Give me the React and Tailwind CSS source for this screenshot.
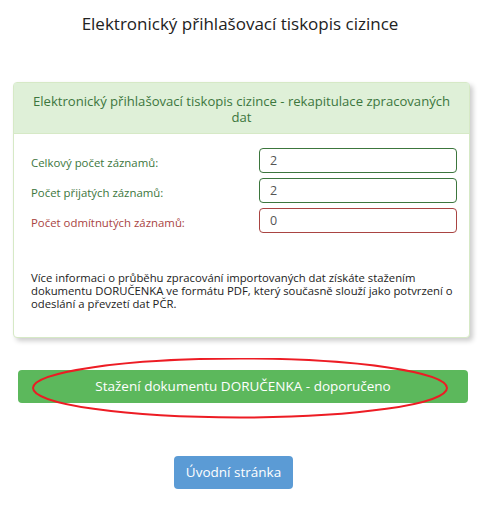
export default function App() {
  const rows = [
    { label: "Celkový počet záznamů:", value: "2", ok: true },
    { label: "Počet přijatých záznamů:", value: "2", ok: true },
    { label: "Počet odmítnutých záznamů:", value: "0", ok: false },
  ];

  return (
    <div className="w-[493px] h-[519px] bg-white text-[#333] font-['Open_Sans',sans-serif]">
      <h1 className="w-[480px] pt-[11px] text-center text-[17px] leading-[26px] text-[#222]">
        Elektronický přihlašovací tiskopis cizince
      </h1>

      {/* Panel */}
      <div className="mx-[13px] mt-[45px] w-[457px] rounded border border-[#d6e9c6] bg-white shadow-[3px_3px_5px_rgba(0,0,0,0.2)]">
        <div className="bg-[#dff0d8] px-[8px] pt-[10px] pb-[8px] text-center text-[13.1px] leading-[16px] text-[#3c763d] border-b border-[#d6e9c6]">
          Elektronický přihlašovací tiskopis cizince - rekapitulace zpracovaných dat
        </div>
        <div className="pl-[17px] pr-[12px] pt-[14px] pb-[27px]">
          <div className="flex flex-col gap-[5px]">
            {rows.map((r) => (
              <div key={r.label} className="flex items-center">
                <span
                  className={`w-[228px] pt-[5px] text-[11.4px] ${
                    r.ok ? "text-[#3c763d]" : "text-[#a94442]"
                  }`}
                >
                  {r.label}
                </span>
                <div
                  className={`ml-auto w-[198px] h-[25px] rounded border pl-[10px] text-[12.5px] leading-[23px] text-[#555] ${
                    r.ok ? "border-[#3c763d]" : "border-[#a94442]"
                  }`}
                >
                  {r.value}
                </div>
              </div>
            ))}
          </div>
          <p className="mt-[38px] text-[11.3px] leading-[13px] text-[#222]">
            Více informaci o průběhu zpracování importovaných dat získáte stažením
            dokumentu DORUČENKA ve formátu PDF, který současně slouží jako potvrzení o
            odeslání a převzetí dat PČR.
          </p>
        </div>
      </div>

      {/* Download button */}
      <div className="relative mx-[18px] mt-[32px] w-[450px]">
        <button className="w-full h-[33px] rounded bg-[#5cb85c] text-[13.5px] text-white">
          Stažení dokumentu DORUČENKA - doporučeno
        </button>
        <svg
          className="absolute left-[14px] top-[-12px] pointer-events-none"
          width="420"
          height="64"
          viewBox="0 0 420 64"
        >
          <ellipse cx="208" cy="30" rx="207" ry="29.5" fill="none" stroke="#ed1c24" strokeWidth="2" />
        </svg>
      </div>

      <div className="mt-[53px] pl-[174px]">
        <button className="h-[33px] w-[119px] rounded bg-[#5b9bd5] text-[13.5px] text-white">
          Úvodní stránka
        </button>
      </div>
    </div>
  );
}
